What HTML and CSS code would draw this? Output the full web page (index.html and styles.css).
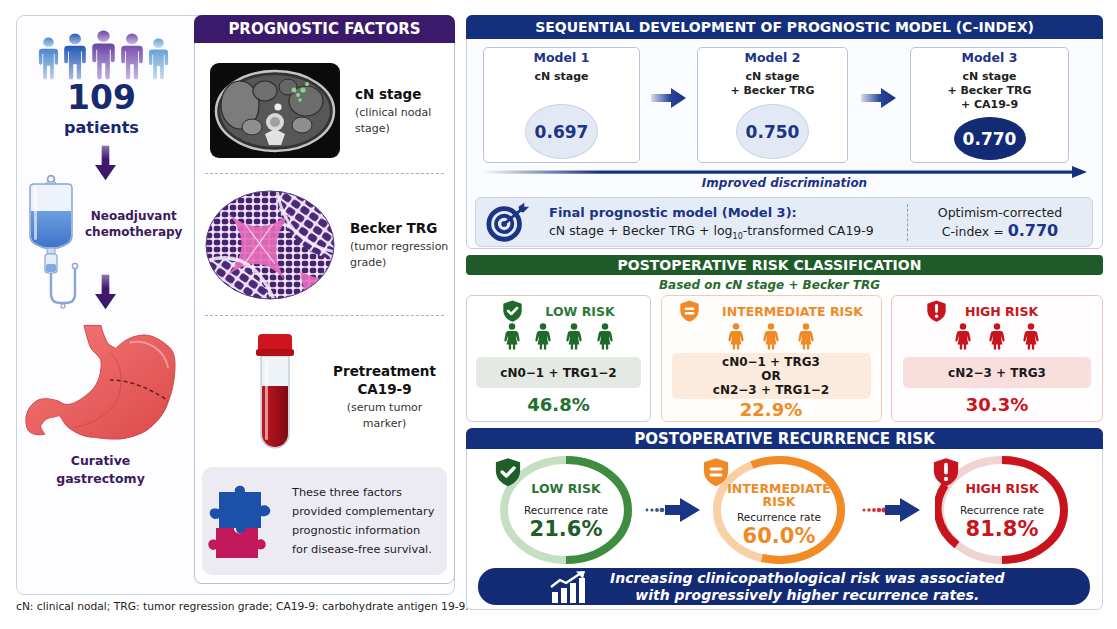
FILE: index.html
```html
<!DOCTYPE html>
<html lang="en">
<head>
<meta charset="utf-8">
<title>Prognostic model for disease-free survival</title>
<link rel="stylesheet" href="styles.css">
</head>
<body>
<svg class="defs" aria-hidden="true">
  <defs>
    <linearGradient id="g1" x1="0" y1="0" x2="0" y2="1"><stop offset="0" stop-color="#4a86cf"/><stop offset="1" stop-color="#4a86cf" stop-opacity=".35"/></linearGradient>
    <linearGradient id="g2" x1="0" y1="0" x2="0" y2="1"><stop offset="0" stop-color="#2559b6"/><stop offset="1" stop-color="#2559b6" stop-opacity=".4"/></linearGradient>
    <linearGradient id="g3" x1="0" y1="0" x2="0" y2="1"><stop offset="0" stop-color="#6a45a6"/><stop offset="1" stop-color="#6a45a6" stop-opacity=".4"/></linearGradient>
    <linearGradient id="g4" x1="0" y1="0" x2="0" y2="1"><stop offset="0" stop-color="#7b52b3"/><stop offset="1" stop-color="#7b52b3" stop-opacity=".4"/></linearGradient>
    <linearGradient id="g5" x1="0" y1="0" x2="0" y2="1"><stop offset="0" stop-color="#68a2d6"/><stop offset="1" stop-color="#68a2d6" stop-opacity=".35"/></linearGradient>
    <linearGradient id="gDown" x1="0" y1="0" x2="0" y2="1"><stop offset="0" stop-color="#8a73ad"/><stop offset=".4" stop-color="#3d1a6e"/><stop offset="1" stop-color="#3a1868"/></linearGradient>
    <linearGradient id="gRight" x1="0" y1="0" x2="1" y2="0"><stop offset="0" stop-color="#d3dbee"/><stop offset=".55" stop-color="#2a4596"/><stop offset="1" stop-color="#14307c"/></linearGradient>
    <linearGradient id="gLine" x1="0" y1="0" x2="1" y2="0"><stop offset="0" stop-color="#14307c" stop-opacity="0"/><stop offset=".2" stop-color="#14307c"/><stop offset="1" stop-color="#14307c"/></linearGradient>
    <linearGradient id="gLiquid" x1="0" y1="0" x2="0" y2="1"><stop offset="0" stop-color="#6d9ee2"/><stop offset="1" stop-color="#3f74c8"/></linearGradient>
    <linearGradient id="gStomach" x1="0" y1="0" x2="1" y2="1"><stop offset="0" stop-color="#f47a78"/><stop offset="1" stop-color="#dc4a4a"/></linearGradient>
    <linearGradient id="gBlood" x1="0" y1="0" x2="1" y2="0"><stop offset="0" stop-color="#c01820"/><stop offset=".5" stop-color="#a30f18"/><stop offset="1" stop-color="#7e0a12"/></linearGradient>
    <pattern id="cells" width="8" height="7" patternUnits="userSpaceOnUse">
      <rect width="8" height="7" fill="#efe4f8"/>
      <rect x=".8" y=".8" width="6.4" height="5.4" rx="1.8" fill="#46226f"/>
    </pattern>
    <pattern id="cells2" width="11" height="9" patternUnits="userSpaceOnUse" patternTransform="rotate(35)">
      <rect width="11" height="9" fill="#efe4f8"/>
      <rect x="1" y="1" width="9" height="7" rx="2.5" fill="#4c2876"/>
    </pattern>
    <symbol id="person" viewBox="0 0 24 48" preserveAspectRatio="none">
      <circle cx="12" cy="6" r="5.5"/>
      <path d="M5.5 13 H18.5 Q22 13 22 16.5 V29 Q22 31 20.2 31 Q18.4 31 18.4 29 V19 H17.6 V45.5 Q17.6 47.5 15.6 47.5 Q13.6 47.5 13.6 45.5 V32 H10.4 V45.5 Q10.4 47.5 8.4 47.5 Q6.4 47.5 6.4 45.5 V19 H5.6 V29 Q5.6 31 3.8 31 Q2 31 2 29 V16.5 Q2 13 5.5 13 Z"/>
    </symbol>
    <symbol id="mini" viewBox="0 0 20 30">
      <circle cx="10" cy="4" r="3.6"/>
      <path d="M6 9 H14 Q16.5 9 17 11.5 L18.5 19 Q18.7 20.5 17.4 20.6 Q16.3 20.7 16 19.5 L14.8 14 V18 L16 24 H13.6 V29.5 H11 V24 H9 V29.5 H6.4 V24 H4 L5.2 18 V14 L4 19.5 Q3.7 20.7 2.6 20.6 Q1.3 20.5 1.5 19 L3 11.5 Q3.5 9 6 9 Z"/>
    </symbol>
    <symbol id="sh-check" viewBox="0 0 24 26">
      <path d="M12 1 L22.5 4.6 V12 C22.5 18.6 18 23 12 25.4 C6 23 1.5 18.6 1.5 12 V4.6 Z"/>
      <path d="M7 13 L10.6 16.4 L17.2 9.6" fill="none" stroke="#fff" stroke-width="3" stroke-linecap="round" stroke-linejoin="round"/>
    </symbol>
    <symbol id="sh-eq" viewBox="0 0 24 26">
      <path d="M12 1 L22.5 4.6 V12 C22.5 18.6 18 23 12 25.4 C6 23 1.5 18.6 1.5 12 V4.6 Z"/>
      <rect x="6.5" y="9" width="11" height="2.8" rx="1.2" fill="#fff"/>
      <rect x="6.5" y="14.2" width="11" height="2.8" rx="1.2" fill="#fff"/>
    </symbol>
    <symbol id="sh-excl" viewBox="0 0 24 26">
      <path d="M12 1 L22.5 4.6 V12 C22.5 18.6 18 23 12 25.4 C6 23 1.5 18.6 1.5 12 V4.6 Z"/>
      <rect x="10.4" y="5" width="3.2" height="10" rx="1.4" fill="#fff"/>
      <circle cx="12" cy="19" r="1.9" fill="#fff"/>
    </symbol>
    <symbol id="fat-right" viewBox="0 0 36 22">
      <path d="M0 7 H20 V1 L35 11 L20 21 V15 H0 Z" fill="url(#gRight)"/>
    </symbol>
  </defs>
</svg>

<div class="page">
  <div class="leftcol">
    <div class="overview">
      <div class="flow">
        <svg class="crowd" viewBox="0 0 134 50" aria-hidden="true">
          <use href="#person" x="0" y="7" width="23" height="43" fill="url(#g1)"/>
          <use href="#person" x="25" y="3" width="26" height="47" fill="url(#g2)"/>
          <use href="#person" x="53" y="0" width="27" height="50" fill="url(#g3)"/>
          <use href="#person" x="82" y="3" width="26" height="47" fill="url(#g4)"/>
          <use href="#person" x="110" y="8" width="23" height="42" fill="url(#g5)"/>
        </svg>
        <div class="big-n">109</div>
        <div class="big-label">patients</div>
        <svg class="down first" viewBox="0 0 22 36" aria-hidden="true"><path d="M7 0 H15 V20 H22 L11 36 L0 20 H7 Z" fill="url(#gDown)"/></svg>

        <div class="iv-block">
          <svg class="iv" viewBox="0 0 58 137" aria-hidden="true">
            <circle cx="24" cy="5" r="3.4" fill="none" stroke="#86a4d4" stroke-width="1.8"/>
            <rect x="19" y="8" width="10" height="4" rx="1.5" fill="#dbe5f5" stroke="#86a4d4" stroke-width="1"/>
            <path d="M3 14 Q3 10 7 10 H41 Q45 10 45 14 V62 Q45 68 38 71 L31 74 H17 L10 71 Q3 68 3 62 Z" fill="#eef3fb" stroke="#86a4d4" stroke-width="1.5"/>
            <path d="M4 37 H44 V62 Q44 67.5 37.6 70.2 L30.8 73 H17.2 L10.4 70.2 Q4 67.5 4 62 Z" fill="url(#gLiquid)"/>
            <rect x="7" y="14" width="3" height="52" rx="1.5" fill="#fff" opacity=".6"/>
            <rect x="20" y="74" width="8" height="6" fill="#cddaf0" stroke="#86a4d4" stroke-width="1"/>
            <rect x="18" y="80" width="12" height="19" rx="3" fill="#e4edf9" stroke="#86a4d4" stroke-width="1.2"/>
            <rect x="19" y="90" width="10" height="8" rx="2" fill="#7ea8e4"/>
            <path d="M24 99 V120 Q24 129 33 129 H39 Q48 129 48 120 V95" fill="none" stroke="#86a4d4" stroke-width="2.4"/>
            <circle cx="48" cy="92" r="2.6" fill="#fff" stroke="#86a4d4" stroke-width="1.4"/>
            <circle cx="36" cy="132" r="2" fill="#fff" stroke="#86a4d4" stroke-width="1.2"/>
          </svg>
          <div class="iv-right">
            <div class="step-text">Neoadjuvant<br>chemotherapy</div>
            <svg class="down second" viewBox="0 0 22 36" aria-hidden="true"><path d="M7 0 H15 V20 H22 L11 36 L0 20 H7 Z" fill="url(#gDown)"/></svg>
          </div>
        </div>

        <svg class="stomach" viewBox="-2 0 154 122" aria-hidden="true">
          <path d="M57.7 4.7 C60 14 62 20 63.3 24.7 C66 32 75 36 75 41.3 C76 52 72 64 66 70 C60 76 50 84 41.7 84.7 C36 85 34 82 31.7 81.3 C24 79 18 78 12 80 C5 83 0 90 -1 98 C-1.5 104 0 110 2 112 C6 116 14 116 18.3 114.7 C14 110 13 106 15 104.7 C18 100 22 98 25 98 C30 97 32 96 33.3 96.3 C36 100 38 105 41.7 108 C50 114 58 118 68.3 118 C80 120 88 120 95 119.7 C108 118 120 113 125 108 C135 100 141 90 143.3 81.3 C148 70 150 56 150 44.7 C150 34 147 28 141.7 24.7 C134 18 124 13 115 14.7 C104 16 96 22 90 28 C86 26 82 24 81 21.3 C78 15 76 10 75 4.7 Z" fill="url(#gStomach)" stroke="#cf4646" stroke-width="1"/>
          <path d="M85 32 C96 44 98 62 92 78 C86 92 70 104 48 108" fill="none" stroke="#c23c3c" stroke-width="1" opacity=".55"/>
          <path d="M84 60 C104 60 124 68 143 81" fill="none" stroke="#6e1a1a" stroke-width="1.5" stroke-dasharray="4 3"/>
          <path d="M104 22 C122 18 140 30 143 48" fill="none" stroke="#fff" stroke-width="2" opacity=".35"/>
        </svg>
        <div class="step-text last">Curative<br>gastrectomy</div>
      </div>

      <section class="factors">
        <h2 class="f-head">PROGNOSTIC FACTORS</h2>
        <div class="f-row r1">
          <svg class="ct" viewBox="0 0 130 95" aria-hidden="true">
            <rect width="130" height="95" rx="9" fill="#0b0b0b"/>
            <ellipse cx="65" cy="48" rx="59" ry="40" fill="#333" stroke="#c4c4c4" stroke-width="2.5"/>
            <ellipse cx="65" cy="48" rx="55" ry="36" fill="#575757"/>
            <ellipse cx="30" cy="42" rx="19" ry="24" fill="#7c7c7c" stroke="#2c2c2c" stroke-width="1.2"/>
            <ellipse cx="55" cy="28" rx="12" ry="10" fill="#707070" stroke="#2c2c2c" stroke-width="1.2"/>
            <ellipse cx="96" cy="38" rx="17" ry="15" fill="#6c6c6c" stroke="#2c2c2c" stroke-width="1.2"/>
            <ellipse cx="78" cy="24" rx="9" ry="8" fill="#666" stroke="#2c2c2c" stroke-width="1"/>
            <ellipse cx="42" cy="64" rx="10" ry="8" fill="#8e8e8e" stroke="#2c2c2c" stroke-width="1"/>
            <ellipse cx="92" cy="62" rx="10" ry="8" fill="#8e8e8e" stroke="#2c2c2c" stroke-width="1"/>
            <circle cx="65" cy="59" r="9" fill="#d8d8d8"/>
            <circle cx="65" cy="59" r="5" fill="#a0a0a0"/>
            <path d="M55 71 L65 66 L75 71 L71 82 L59 82 Z" fill="#e2e2e2"/>
            <circle cx="68" cy="44" r="3.6" fill="#ececec"/>
            <circle cx="84" cy="27" r="2.5" fill="#8fd08f"/>
            <circle cx="88" cy="32" r="2" fill="#8fd08f"/>
            <circle cx="93" cy="27" r="2.6" fill="#8fd08f"/>
            <circle cx="97" cy="21" r="2" fill="#8fd08f"/>
            <circle cx="90" cy="37" r="1.8" fill="#8fd08f"/>
          </svg>
          <div class="f-text">
            <div class="f-name">cN stage</div>
            <div class="f-sub">(clinical nodal<br>stage)</div>
          </div>
        </div>
        <div class="f-div"></div>
        <div class="f-row r2">
          <svg class="histo" viewBox="0 0 130 110" aria-hidden="true">
            <defs><clipPath id="hclip"><ellipse cx="65" cy="55" rx="64" ry="54"/></clipPath></defs>
            <g clip-path="url(#hclip)">
              <rect width="130" height="110" fill="url(#cells)"/>
              <path d="M70 0 Q78 60 130 70 V0 Z" fill="url(#cells2)"/>
              <path d="M0 70 Q45 62 66 110 H0 Z" fill="url(#cells2)"/>
              <path d="M24 24 Q55 50 86 22 Q60 55 80 90 Q54 60 22 86 Q50 56 24 24 Z" fill="#e66cbc" opacity=".92"/>
              <path d="M40 34 L70 74 M68 34 L38 76" stroke="#f8e6f4" stroke-width="1.2" opacity=".8"/>
              <path d="M95 82 L118 90 L100 106 Z" fill="#e66cbc" opacity=".9"/>
              <path d="M4 70 Q48 58 70 112" fill="none" stroke="#f6eefc" stroke-width="3.5" opacity=".85"/>
              <path d="M72 0 Q80 52 130 62" fill="none" stroke="#f6eefc" stroke-width="3" opacity=".85"/>
            </g>
            <ellipse cx="65" cy="55" rx="64" ry="54" fill="none" stroke="#5a3a86" stroke-width="1"/>
          </svg>
          <div class="f-text">
            <div class="f-name">Becker TRG</div>
            <div class="f-sub">(tumor regression<br>grade)</div>
          </div>
        </div>
        <div class="f-div"></div>
        <div class="f-row r3">
          <svg class="tube" viewBox="0 0 40 116" aria-hidden="true">
            <path d="M6 22 H34 V100 A14 14 0 0 1 6 100 Z" fill="#eef3f8" stroke="#b5c5d6" stroke-width="1.2"/>
            <path d="M7 52 H33 V100 A13 13 0 0 1 7 100 Z" fill="url(#gBlood)"/>
            <rect x="10" y="26" width="3" height="80" rx="1.5" fill="#fff" opacity=".55"/>
            <rect x="3" y="0" width="34" height="19" rx="4" fill="#d0141e"/>
            <rect x="1" y="15" width="38" height="7" rx="2.5" fill="#b20e18"/>
          </svg>
          <div class="f-text center">
            <div class="f-name">Pretreatment<br>CA19-9</div>
            <div class="f-sub">(serum tumor<br>marker)</div>
          </div>
        </div>
        <div class="f-info">
          <svg class="puzzle" viewBox="0 0 75 78" aria-hidden="true">
            <path d="M14 10 H30 C28 3 40 1 40 9 V10 H56 V24 C62 21 69 28 63 33 C60 35 56 34 56 34 V46 H41 C43 52 32 55 31 47 V46 H14 V36 C8 40 1 31 7 27 C9 26 14 27 14 27 Z" fill="#1d50a8"/>
            <path d="M11 46 H29 C28 52 40 54 40 47 V46 H53 V58 C59 55 64 63 58 67 C56 68 53 67 53 67 V76 H11 V67 C5 71 0 61 6 58 C8 57 11 58 11 58 Z" fill="#c4185c"/>
          </svg>
          <p class="info-text">These three factors<br>provided complementary<br>prognostic information<br>for disease-free survival.</p>
        </div>
      </section>
    </div>
    <p class="footnote">cN: clinical nodal; TRG: tumor regression grade; CA19-9: carbohydrate antigen 19-9.</p>
  </div>

  <div class="rightcol">
    <section class="models">
      <h2 class="bar navy">SEQUENTIAL DEVELOPMENT OF PROGNOSTIC MODEL (C-INDEX)</h2>
      <div class="model-row">
        <div class="model">
          <div class="m-title">Model 1</div>
          <div class="m-line">cN stage</div>
          <div class="cidx">0.697</div>
        </div>
        <svg class="m-arrow" aria-hidden="true"><use href="#fat-right"/></svg>
        <div class="model">
          <div class="m-title">Model 2</div>
          <div class="m-line">cN stage<br>+ Becker TRG</div>
          <div class="cidx">0.750</div>
        </div>
        <svg class="m-arrow" aria-hidden="true"><use href="#fat-right"/></svg>
        <div class="model">
          <div class="m-title">Model 3</div>
          <div class="m-line">cN stage<br>+ Becker TRG<br>+ CA19-9</div>
          <div class="cidx best">0.770</div>
        </div>
      </div>
      <svg class="long-arrow" viewBox="0 0 605 12" aria-hidden="true">
        <rect x="0" y="4.5" width="592" height="3.2" fill="url(#gLine)"/>
        <path d="M590 0 L605 6 L590 12 Z" fill="#14307c"/>
      </svg>
      <div class="improved">Improved discrimination</div>
      <div class="final">
        <svg class="target" viewBox="0 0 48 40" aria-hidden="true">
          <circle cx="20" cy="22" r="16" fill="none" stroke="#1c3484" stroke-width="5"/>
          <circle cx="20" cy="22" r="8.5" fill="none" stroke="#1c3484" stroke-width="4"/>
          <circle cx="20" cy="22" r="3" fill="#1c3484"/>
          <path d="M20 22 L39 6" stroke="#1c3484" stroke-width="3" stroke-linecap="round"/>
          <path d="M35 4 L41 0 L41 4 L46 4 L40 10 L36 9 Z" fill="#1c3484"/>
        </svg>
        <div class="final-text">
          <div class="final-title">Final prognostic model (Model 3):</div>
          <div class="final-formula">cN stage + Becker TRG + log<sub>10</sub>-transformed CA19-9</div>
        </div>
        <div class="final-sep"></div>
        <div class="final-right">
          <div>Optimism-corrected</div>
          <div>C-index = <b class="final-val">0.770</b></div>
        </div>
      </div>
    </section>

    <section class="risk">
      <h2 class="bar green">POSTOPERATIVE RISK CLASSIFICATION</h2>
      <div class="based">Based on cN stage + Becker TRG</div>
      <div class="cards">
        <div class="card low">
          <div class="c-title"><svg class="c-shield" aria-hidden="true"><use href="#sh-check"/></svg><span>LOW RISK</span></div>
          <div class="c-people">
            <svg aria-hidden="true"><use href="#mini"/></svg><svg aria-hidden="true"><use href="#mini"/></svg><svg aria-hidden="true"><use href="#mini"/></svg><svg aria-hidden="true"><use href="#mini"/></svg>
          </div>
          <div class="c-box">cN0−1 + TRG1−2</div>
          <div class="c-pct">46.8%</div>
        </div>
        <div class="card mid">
          <div class="c-title"><svg class="c-shield" aria-hidden="true"><use href="#sh-eq"/></svg><span>INTERMEDIATE RISK</span></div>
          <div class="c-people">
            <svg aria-hidden="true"><use href="#mini"/></svg><svg aria-hidden="true"><use href="#mini"/></svg><svg aria-hidden="true"><use href="#mini"/></svg>
          </div>
          <div class="c-box">cN0−1 + TRG3<br>OR<br>cN2−3 + TRG1−2</div>
          <div class="c-pct">22.9%</div>
        </div>
        <div class="card high">
          <div class="c-title"><svg class="c-shield" aria-hidden="true"><use href="#sh-excl"/></svg><span>HIGH RISK</span></div>
          <div class="c-people">
            <svg aria-hidden="true"><use href="#mini"/></svg><svg aria-hidden="true"><use href="#mini"/></svg><svg aria-hidden="true"><use href="#mini"/></svg>
          </div>
          <div class="c-box">cN2−3 + TRG3</div>
          <div class="c-pct">30.3%</div>
        </div>
      </div>
    </section>

    <section class="recur">
      <h2 class="bar navy">POSTOPERATIVE RECURRENCE RISK</h2>
      <div class="rings">
        <div class="ring low">
          <svg class="ring-svg" viewBox="0 0 134 110" aria-hidden="true">
            <ellipse cx="67" cy="55" rx="62" ry="50" fill="#fff" stroke="#c6dfc2" stroke-width="8"/>
            <path d="M67 5 A62 50 0 0 1 67 105" fill="none" stroke="#3d8c40" stroke-width="8"/>
          </svg>
          <svg class="r-shield" aria-hidden="true"><use href="#sh-check"/></svg>
          <div class="r-title">LOW RISK</div>
          <div class="r-rate">Recurrence rate</div>
          <div class="r-pct">21.6%</div>
        </div>
        <svg class="r-arrow a1" viewBox="0 0 56 26" aria-hidden="true">
          <circle cx="2" cy="13" r="1.4"/><circle cx="7" cy="13" r="1.6"/><circle cx="12" cy="13" r="1.9"/><circle cx="17" cy="13" r="2.3"/>
          <path d="M20 8 H35 V1 L55 13 L35 25 V18 H20 Z" fill="#1a3586"/>
        </svg>
        <div class="ring mid">
          <svg class="ring-svg" viewBox="0 0 134 110" aria-hidden="true">
            <ellipse cx="67" cy="55" rx="62" ry="50" fill="#fff" stroke="#f9cfa6" stroke-width="8"/>
            <path d="M40 10 A62 50 0 0 1 129 55 A62 50 0 0 1 50 103" fill="none" stroke="#f28a26" stroke-width="8"/>
          </svg>
          <svg class="r-shield" aria-hidden="true"><use href="#sh-eq"/></svg>
          <div class="r-title">INTERMEDIATE<br>RISK</div>
          <div class="r-rate">Recurrence rate</div>
          <div class="r-pct">60.0%</div>
        </div>
        <svg class="r-arrow a2" viewBox="0 0 60 26" aria-hidden="true">
          <circle cx="3" cy="13" r="1.5"/><circle cx="8" cy="13" r="1.7"/><circle cx="13" cy="13" r="1.9"/><circle cx="18" cy="13" r="2.2"/><circle cx="23" cy="13" r="2.5"/>
          <path d="M24 8 H39 V1 L59 13 L39 25 V18 H24 Z" fill="#1a3586"/>
        </svg>
        <div class="ring high">
          <svg class="ring-svg" viewBox="0 0 134 110" aria-hidden="true">
            <ellipse cx="67" cy="55" rx="62" ry="50" fill="#fff" stroke="#f1d3d3" stroke-width="8"/>
            <path d="M67 5 A62 50 0 0 1 67 105" fill="none" stroke="#c8151d" stroke-width="8"/>
            <path d="M22 90 A62 50 0 0 1 10 30" fill="none" stroke="#c8151d" stroke-width="8"/>
          </svg>
          <svg class="r-shield" aria-hidden="true"><use href="#sh-excl"/></svg>
          <div class="r-title">HIGH RISK</div>
          <div class="r-rate">Recurrence rate</div>
          <div class="r-pct">81.8%</div>
        </div>
      </div>
      <div class="banner">
        <svg class="chart" viewBox="0 0 38 32" aria-hidden="true">
          <rect x="2" y="21" width="6" height="11" fill="#fff"/>
          <rect x="11" y="17" width="6" height="15" fill="#fff"/>
          <rect x="20" y="12" width="6" height="20" fill="#fff"/>
          <rect x="29" y="7" width="6" height="25" fill="#fff"/>
          <path d="M1 16 L10 9 L16 12 L31 2" fill="none" stroke="#fff" stroke-width="2.4" stroke-linejoin="round"/>
          <path d="M26 0.5 L35 0 L33 8 Z" fill="#fff"/>
        </svg>
        <p class="banner-text">Increasing clinicopathological risk was associated<br>with progressively higher recurrence rates.</p>
      </div>
    </section>
  </div>
</div>
</body>
</html>
```

FILE: styles.css
```css
* { box-sizing: border-box; margin: 0; padding: 0; }

body {
  margin: 0;
  background: #ffffff;
  font-family: "DejaVu Sans", "Noto Sans", sans-serif;
  color: #1a1a1a;
}

.defs { position: absolute; width: 0; height: 0; overflow: hidden; }

.page {
  width: 1117px;
  height: 629px;
  display: flex;
  gap: 11px;
  padding: 15px 0 0 16px;
  overflow: hidden;
}

/* ---------- left side ---------- */
.leftcol { width: 439px; flex: none; }

.overview {
  height: 580px;
  border: 1px solid #c9d3e4;
  border-radius: 8px;
  display: flex;
  background: #fdfdff;
}

.flow {
  width: 177px;
  flex: none;
  display: flex;
  flex-direction: column;
  align-items: center;
}

.crowd { width: 134px; height: 50px; margin-top: 14px; margin-left: -4px; display: block; }

.big-n {
  font-weight: bold;
  font-size: 33px;
  line-height: 38px;
  color: #172a6e;
  margin-top: -1px;
  margin-left: -8px;
}

.big-label {
  font-weight: bold;
  font-size: 16px;
  line-height: 19px;
  color: #172a6e;
  margin-top: 1px;
  margin-left: -8px;
}

.down { width: 21px; height: 36px; display: block; }
.down.first { margin-top: 8px; }

.iv-block {
  margin-top: -7px;
  width: 177px;
  display: grid;
  grid-template-columns: 68px 1fr;
}

.iv { width: 58px; height: 137px; margin-left: 10px; display: block; }

.iv-right { display: flex; flex-direction: column; padding-top: 34px; padding-right: 18px; }

.step-text {
  font-weight: bold;
  font-size: 12px;
  line-height: 16px;
  color: #3b1b5c;
  text-align: center;
}

.down.second { margin-top: 34px; margin-left: 10px; }

.stomach { width: 152px; height: 122px; margin-top: 9px; margin-left: -10px; display: block; }

.step-text.last { font-size: 12.5px; line-height: 18px; margin-top: 10px; margin-left: -10px; }

/* factors panel */
.factors {
  width: 261px;
  margin: -1px -1px 0 0;
  height: 569px;
  border: 1px solid #b9c1d6;
  border-radius: 8px;
  background: #ffffff;
  display: flex;
  flex-direction: column;
}

.f-head {
  height: 28px;
  margin: -1px -1px 0;
  background: #3b1a6b;
  border-radius: 8px 8px 0 0;
  color: #ffffff;
  font-size: 15px;
  font-weight: bold;
  display: flex;
  align-items: center;
  justify-content: center;
}

.f-row { display: flex; align-items: center; }
.f-row.r1 { margin-top: 20px; height: 95px; padding-left: 15px; }
.f-row.r2 { margin-top: 16px; height: 110px; padding-left: 10px; }
.f-row.r3 { margin-top: 18px; height: 116px; padding-left: 60px; }

.ct { width: 130px; height: 95px; display: block; flex: none; }
.histo { width: 130px; height: 110px; display: block; flex: none; }
.tube { width: 40px; height: 116px; display: block; flex: none; }

.f-text { margin-left: 15px; }
.f-text.center { flex: 1; margin-left: 0; padding-left: 20px; text-align: center; padding-top: 10px; }

.f-name { font-weight: bold; font-size: 13.5px; line-height: 18px; color: #111; }
.f-sub { font-size: 11px; line-height: 16px; color: #333; margin-top: 2px; }

.f-div {
  border-top: 1.5px dashed #a9aec6;
  margin: 15px 10px 0;
}

.f-info {
  margin: 17px 7px 0;
  height: 108px;
  background: #ecebf4;
  border-radius: 10px;
  display: flex;
  align-items: center;
  padding-left: 3px;
}

.puzzle { width: 75px; height: 78px; flex: none; display: block; }

.info-text {
  margin-left: 12px;
  font-size: 11.3px;
  line-height: 19px;
  color: #1d1d1d;
}

.footnote {
  margin-top: 5px;
  font-size: 10.7px;
  line-height: 14px;
  color: #222;
  white-space: nowrap;
}

/* ---------- right side ---------- */
.rightcol { width: 637px; flex: none; display: flex; flex-direction: column; }

.bar {
  color: #ffffff;
  font-weight: bold;
  display: flex;
  align-items: center;
  justify-content: center;
}
.bar.navy { background: #14307c; }
.bar.green { background: #1f5b28; }

.models {
  height: 234px;
  border: 1px solid #c3cee2;
  border-radius: 6px;
  background: #fbfcff;
  display: flex;
  flex-direction: column;
}

.models .bar {
  height: 24px;
  margin: -1px -1px 0;
  border-radius: 6px 6px 0 0;
  font-size: 14px;
}

.model-row {
  margin-top: 8px;
  height: 116px;
  padding-left: 16px;
  display: grid;
  grid-template-columns: 157px 57px 151px 62px 159px;
}

.model {
  border: 1px solid #b6c4dc;
  border-radius: 5px;
  background: #ffffff;
  display: flex;
  flex-direction: column;
  align-items: center;
  padding-top: 1px;
}

.m-title { font-weight: bold; font-size: 12.5px; line-height: 18px; color: #1b3486; }
.m-line { font-weight: bold; font-size: 11px; line-height: 14px; color: #222; text-align: center; margin-top: 3px; }

.cidx {
  margin-top: auto;
  margin-bottom: 3px;
  width: 73px;
  height: 55px;
  border-radius: 50%;
  background: #e2e8f4;
  border: 1px solid #c8d2e6;
  display: flex;
  align-items: center;
  justify-content: center;
  font-weight: bold;
  font-size: 17px;
  color: #1b3486;
}
.cidx.best {
  width: 72px;
  height: 43px;
  background: #132b74;
  border-color: #132b74;
  color: #ffffff;
  margin-bottom: 2px;
}

.m-arrow { width: 36px; height: 22px; margin-top: 40px; justify-self: center; display: block; }

.long-arrow { width: 605px; height: 12px; margin: 3px 0 0 15px; display: block; }

.improved {
  margin-top: -2px;
  text-align: center;
  font-size: 12px;
  line-height: 14px;
  font-weight: bold;
  font-style: italic;
  color: #1b3486;
}

.final {
  margin: 7px 9px 0 8px;
  height: 50px;
  background: #e6ecf6;
  border: 1px solid #c8d3e6;
  border-radius: 6px;
  display: flex;
  align-items: center;
  padding-left: 9px;
}

.target { width: 46px; height: 40px; flex: none; display: block; }

.final-text { width: 358px; flex: none; margin-left: 18px; }
.final-title { font-weight: bold; font-size: 13px; line-height: 18px; color: #1b3486; }
.final-formula { font-size: 12.5px; line-height: 18px; color: #222; }
.final-formula sub { font-size: 8px; line-height: 0; }

.final-sep { height: 37px; border-left: 1.5px dashed #8d9bbb; }

.final-right {
  flex: 1;
  text-align: center;
  font-size: 12.5px;
  line-height: 18px;
  color: #222;
}
.final-val { font-size: 16px; color: #1b3486; }

/* risk classification */
.risk { margin-top: 6px; display: flex; flex-direction: column; }
.risk .bar { height: 20px; border-radius: 4px; font-size: 14px; padding-right: 30px; }

.based {
  height: 20px;
  line-height: 20px;
  text-align: center;
  padding-right: 30px;
  font-size: 12px;
  font-weight: bold;
  font-style: italic;
  color: #2a6a2e;
}

.cards {
  height: 126px;
  display: grid;
  grid-template-columns: 185px 221px 212px;
  gap: 9.5px;
}

.card {
  border: 1px solid;
  border-radius: 6px;
  background: #ffffff;
  display: flex;
  flex-direction: column;
  align-items: center;
}
.card.low { border-color: #c6d4c6; color: #1f6a2b; }
.card.mid { border-color: #f4cda8; color: #f08a26; background: #fffdfb; }
.card.high { border-color: #efc3c3; color: #c8151d; background: #fffdfd; }

.c-title {
  margin-top: 4px;
  height: 22px;
  display: flex;
  align-items: center;
  gap: 22px;
  font-weight: bold;
  font-size: 12.5px;
}
.card.low .c-title span { color: #2c7a35; }
.card.high .c-title { gap: 18px; margin-right: 30px; }

.c-shield { width: 21px; height: 24px; fill: currentColor; display: block; }

.c-people { height: 27px; margin-top: 1px; display: flex; gap: 13px; }
.card.mid .c-people { gap: 17px; }
.card.high .c-people { gap: 16px; }
.c-people svg { width: 18px; height: 27px; fill: currentColor; display: block; }

.c-box {
  align-self: stretch;
  margin: 7px 9px 0;
  height: 31px;
  border-radius: 5px;
  display: flex;
  align-items: center;
  justify-content: center;
  text-align: center;
  font-weight: bold;
  font-size: 12px;
  line-height: 14px;
  color: #1a1a1a;
}
.card.low .c-box { background: #e4e9e3; }
.card.mid .c-box { background: #fcebdc; height: 46px; margin: 3px 10px 0; }
.card.high .c-box { background: #f9dede; margin: 7px 11px 0; }

.c-pct { font-weight: bold; font-size: 18px; line-height: 22px; margin-top: 6px; }
.card.low .c-pct { color: #257030; }
.card.mid .c-pct { margin-top: 0; }

/* recurrence */
.recur {
  margin-top: 7px;
  height: 182px;
  border: 1px solid #c8d2e4;
  border-radius: 6px;
  background: #ffffff;
  display: flex;
  flex-direction: column;
}
.recur .bar {
  height: 21px;
  margin: -1px -1px 0;
  border-radius: 6px 6px 0 0;
  font-size: 15px;
}

.rings {
  margin-top: 6px;
  height: 110px;
  padding-left: 32px;
  display: grid;
  grid-template-columns: 134px 79px 134px 89px 134px;
}

.ring {
  position: relative;
  height: 110px;
  display: flex;
  flex-direction: column;
  align-items: center;
  padding-top: 26px;
  text-align: center;
}
.ring.mid { padding-top: 27px; }

.ring-svg { position: absolute; left: 0; top: 0; width: 134px; height: 110px; }

.r-shield { position: absolute; top: 2px; width: 32px; height: 30px; fill: currentColor; }
.ring.low .r-shield { left: -7px; }
.ring.mid .r-shield { left: -12px; }
.ring.high .r-shield { left: -5px; }

.ring.low { color: #1f5e28; }
.ring.mid { color: #f08a26; }
.ring.high { color: #c8151d; }

.r-title { position: relative; font-weight: bold; font-size: 12.5px; line-height: 16px; }
.ring.low .r-title { color: #2a7433; }
.ring.mid .r-title { line-height: 13px; }

.r-rate { position: relative; font-size: 10.5px; line-height: 14px; color: #222; margin-top: 6px; }
.ring.mid .r-rate { margin-top: 2px; }

.r-pct { position: relative; font-weight: bold; font-size: 21px; line-height: 24px; }

.r-arrow { align-self: center; justify-self: center; display: block; }
.r-arrow.a1 { width: 56px; height: 26px; fill: #2f5a7a; }
.r-arrow.a2 { width: 60px; height: 26px; fill: #d2303a; }

.banner {
  margin: 3px 12px 0 11px;
  height: 37px;
  background: #132a74;
  border-radius: 18px;
  display: flex;
  align-items: center;
}

.chart { width: 38px; height: 32px; margin-left: 72px; flex: none; display: block; }

.banner-text {
  margin-left: 22px;
  font-weight: bold;
  font-style: italic;
  font-size: 14px;
  line-height: 17px;
  color: #ffffff;
  text-align: center;
  white-space: nowrap;
}
```
